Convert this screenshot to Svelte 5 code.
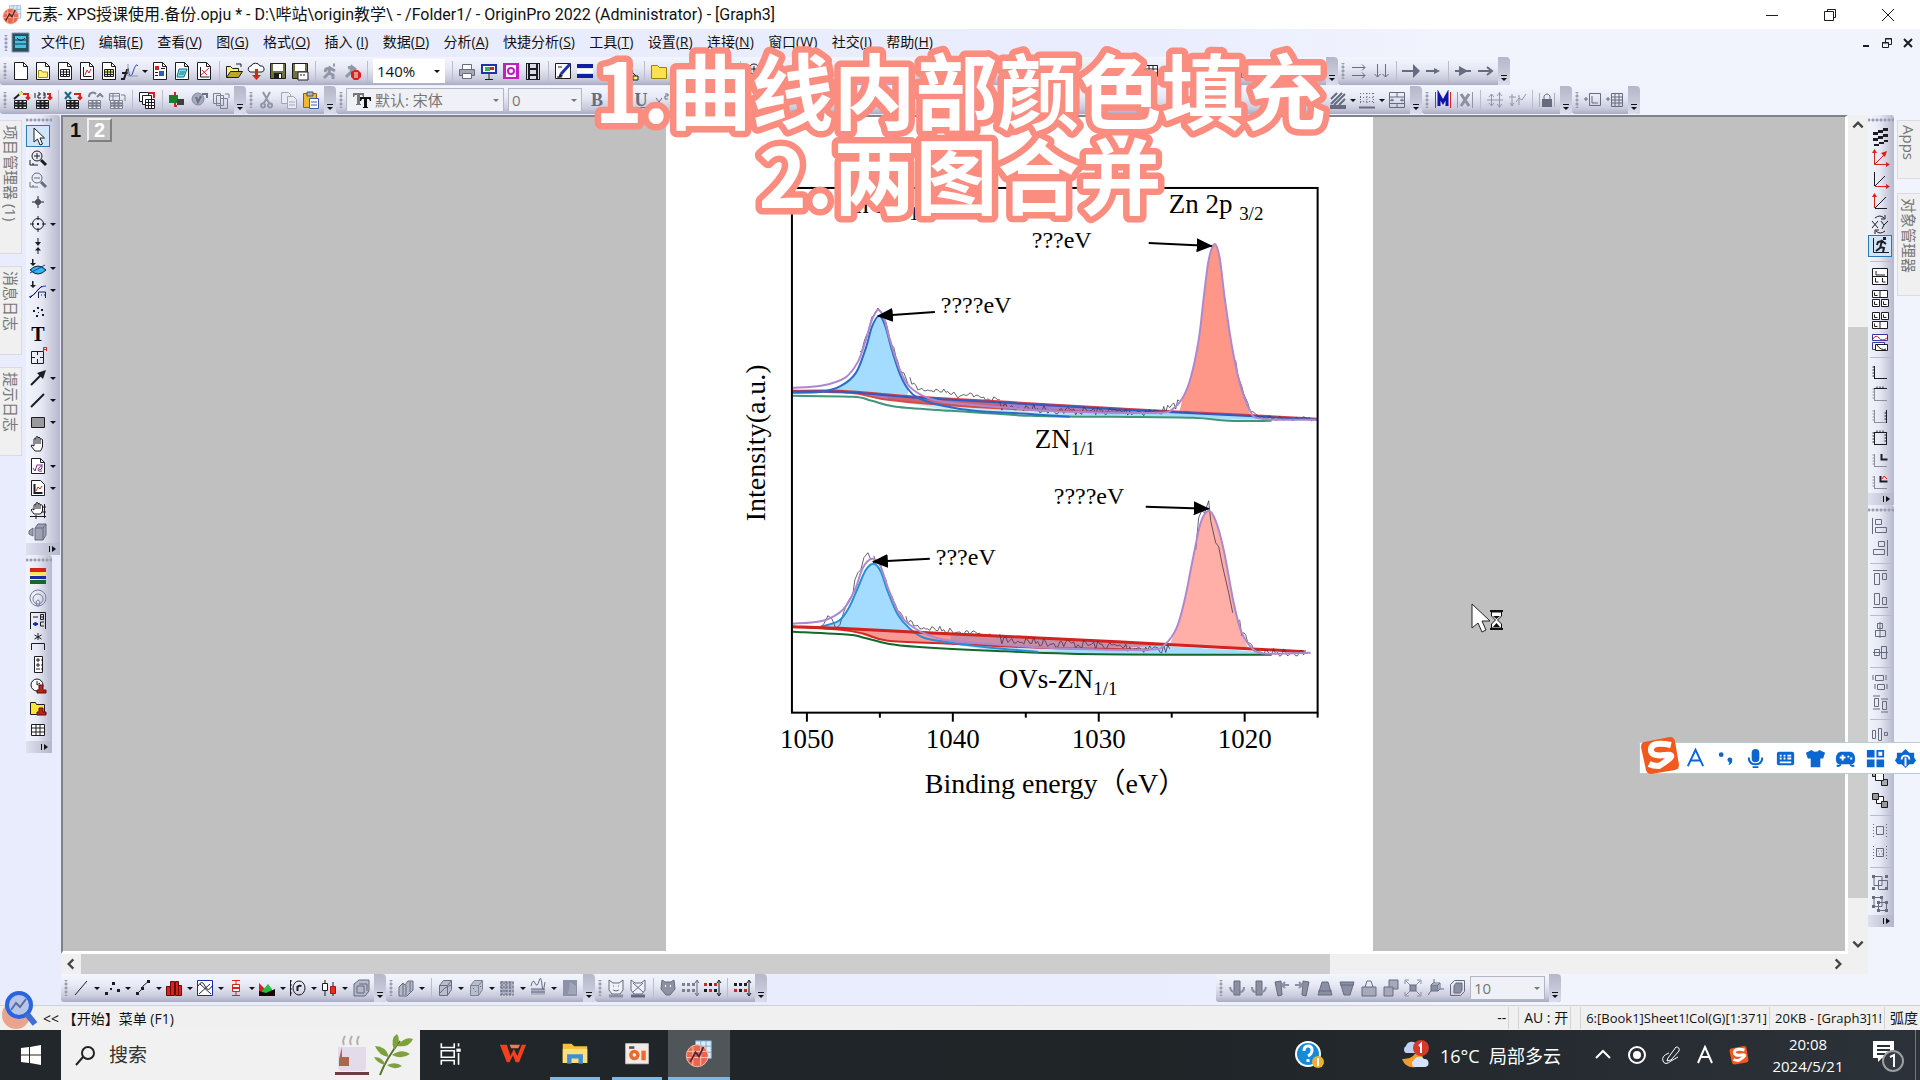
<script lang="ts">
    type Point = [number, number];

    const DARK = '#1c1c22';
    const GREY = '#666b80';
    const RED = '#d3231a';

    const s = (d: string, color = DARK, width = 1) =>
        `<path d="${d}" fill="none" stroke="${color}" stroke-width="${width}"/>`;
    const f = (d: string, color = DARK, stroke = 'none') =>
        `<path d="${d}" fill="${color}" stroke="${stroke}"/>`;

    const PAGE = f('M3.5 1.5h9l4 4v13h-13z', '#fff', DARK) + s('M12.5 1.5v4h4');
    const GRID = f('M5.5 8.5h9v7h-9z', '#fff', DARK) + s('M5 11h10M5 13.5h10M8.5 8v8M11.5 8v8');
    const sheet = (c: string) => f('M3.5 10.5h12v8h-12z', '#fff', c) + s('M3 13.2h13M3 15.8h13M7.5 10v9M11.5 10v9', c, 2);
    const cubeAt = (c: string) => f('M4.5 7.5l4-5h8v9l-4 6h-8z', '#b9bdcc', c) + s('M4.5 7.5h8l4-5M12.5 7.5v10', c);
    const mini = (x: number, y: number, w = 7, h = 7) =>
        f(`M${x} ${y}h${w}v${h}h-${w}z`, '#fff', DARK) + s(`M${x + 2} ${y + 2}v${h - 4}h3`);
    const axes = (l: string, b: string, t = '', r = '') =>
        s('M4.5 4v12.5', l) + s('M4 16.5h13', b) + s('M2.5 5h2M2.5 8h2M2.5 11h2M2.5 14h2', l) +
        (t ? s('M4 4.5h13M7 2.5v2M10 2.5v2M13 2.5v2', t) : '') + (r ? s('M16.5 4v13M14.5 7h2M14.5 10h2M14.5 13h2', r) : '');

    const icons: Record<string, string> = {
        'new page': PAGE,
        'new folder': PAGE + f('M5.5 9.5h3l1 1.5h5v5.500h-9z', '#fff27a', '#a58b12'),
        'new workbook': PAGE + GRID,
        'new graph': PAGE + s('M6.5 6v9.500h8') + s('M8 14l2-5 2 3 2-4', RED),
        'new matrix': PAGE + f('M5 8h10v8H5z', '#f9e75c') + s('M5.500 8.500h9v7h-9zM5 11h10M5 13.500h10M8.500 8v8M11.500 8v8'),
        'new function': s('M8 7q2 14 5 4t5-6', '#3346c4') + s('M1 18h3l3-9h2M2 12h6', DARK, 2) + s('M8 3v12h10', '#9095b4'),
        'new layout': PAGE + f('M5 5h4v4H5z', RED) + f('M9 10h5v5H9z', '#2f55c8') + s('M5 11.500h3M5 14.500h3M11 7.500h4'),
        'new notes': PAGE + f('M7 8h8l-3 8H5z', '#7ee0ec', '#146d86') + s('M8 11h5M7 13h5', '#146d86'),
        'new excel': PAGE + s('M6 15l9-8M8 9l5 5', RED) + s('M6.500 6v10h9'),
        'open': f('M2.500 16.500v-11h4l2 2h6v3', '#fff27a', DARK) + f('M2.500 16.500l4-6h12l-4 6z', '#b8a72a', DARK) + s('M12 3h5v3'),
        'open cloud': f('M3 10a3 3 0 0 1 2-5 5 5 0 0 1 9 0 3 3 0 0 1 2 6H4z', '#fff', DARK) + f('M9 8h3v6h3l-4.500 5L6 14h3z', RED),
        'save': f('M2.500 2.500h15v15h-15z', '#6f7240', DARK) + f('M5 3h10v7H5z', '#fff') + f('M6 12h8v6H6z') + f('M11 13h2v4h-2z', '#fff'),
        'save as': f('M2.500 2.500h15v15h-15z', '#6f7240', DARK) + f('M5 3h10v7H5z', '#fff') + f('M8 11h10v8H8z', '#fff', DARK) + s('M10 14h2M13 14h2'),
        'recalculate': s('M4 17l5-5 1-5 5 3M10 7L6 8l-1 3M9 12l4 2v4M13 4h2', '#9297a8', 3),
        'stop': s('M4 16l5-5 1-5 4 3M10 6L6 7', '#9297a8', 3) + f('M9 11l3-2h4l3 3v4l-3 3h-4l-3-3z', RED) + s('M13 11v6M15 11v6', '#fff'),
        'print': f('M5.500 3.500h9v5h-9z', '#fff', GREY) + f('M2.500 8.500h15v6h-15z', '#a4a8b8', GREY) + f('M5.500 12.500h9v5h-9z', '#fff', GREY),
        'slide show': f('M2 3h16v10H2z', '#1d35a8') + f('M4 5h12v6H4z', '#fff') + f('M6 6h5v4H6z', '#43ad46') + f('M11 6h4v3h-4z', RED) + s('M10 13v5M6 18.500h8'),
        'send': f('M2 2h16v16H2z', '#c31fc0') + f('M5 4h10v12H5z', '#fff') + s('M7 10a3 3 0 1 0 6 0 3 3 0 1 0-6 0', '#c31fc0', 2),
        'video': f('M3 2h14v17H3z') + f('M7 3h6v4H7zM7 9h6v4H7zM7 15h6v3H7z', '#d9dce8') + s('M4.500 3v15M15.500 3v15', '#d9dce8', 1),
        'brush': f('M2.500 2.500h15v15h-15z', '#fff', DARK) + s('M17 3L8 13', '#1d35a8', 3) + s('M4 16h5M5 6h4') + f('M7 12l3 3-5 2z'),
        'layers': f('M2 3h16v4H2zM2 13h16v4H2z', '#10209f') + f('M2 8h16v4H2z', '#fff'),
        'digitizer': f('M3 3h14v14H3z', '#fff', DARK) + s('M5 15l4-6 3 3 4-7', RED, 2),
        'tree': f('M8 2h5v4H8zM2 15h5v4H2zM14 15h5v4h-5z', '#fff36a', DARK) + f('M10.500 7l3.500 3-3.500 3L7 10z', '#59bde0', DARK) + s('M8 11l-4 4M13 11l4 4'),
        'explorer': f('M2.500 4.500h6l2 2h7v11h-15z', '#fbe24c', '#9b820f'),
        'wizard': sheet(DARK) + s('M3 9l8-7', DARK, 2) + s('M12 4h5v5M15 7l2 2 2-2', RED, 2) + f('M8 2h3v3H8z', '#efe44c'),
        'import ascii': sheet(DARK) + s('M2 3v5M5 3h2v2H5v3h3M10 3h2v5h-2M10 5h2', DARK) + s('M14 4h3v5M15 7l2 2 2-2', RED, 2),
        'import excel': sheet(DARK) + s('M2 2l6 7M8 2L2 9', '#1a6a7d', 2) + s('M11 4h6v5M15 7l2 2 2-2', RED, 2),
        'reimport': sheet('#7d8293') + s('M4 7a4 4 0 0 1 7-3M12 7l3-3 3 3', '#7d8293', 2),
        'clone': s('M2.500 3.500h10v7h-10zM2 6h11M6 3v8M14 5h4v6', '#7d8293', 1) + sheet('#7d8293'),
        'batch': f('M2.500 2.500h9v9h-9z', '#fff', DARK) + f('M5.500 5.500h9v9h-9z', '#fff', DARK) + f('M8.500 9.500h9v9h-9z', '#fff', DARK) + s('M8 12.500h10M8 15.500h10M11.500 10v8M14.500 10v8') + s('M12 3h5v5', RED, 2),
        'connect': f('M2 5h9v8H2z', '#217b2a') + f('M10 9h7v6h-7z', '#39413a') + s('M8 2v3M8 13v3h2', RED, 2),
        'disconnect': f('M3 9a6 6 0 1 0 12 0A6 6 0 1 0 3 9', '#a6aabb', '#8589a0') + s('M7 7l2 5 3-6M13 4h5v4', '#6d7187', 2),
        'copy pages': s('M2.500 3.500h7v10h-7zM5.500 5.500h7v10h-7zM9.500 8.500h7v10h-7zM14 4h4v4', '#7d8293'),
        'cut': s('M6 2l6 11M13 2L7 13M4 16a2 2 0 1 0 4-1 2 2 0 1 0-4 1M11 15a2 2 0 1 0 4 1 2 2 0 1 0-4-1', '#9297a8', 2),
        'copy': f('M2.500 2.500h7l2 2v9h-9z', '#e8ebf4', '#a2a6b7') + f('M8.500 6.500h6l3 3v9h-9z', '#e8ebf4', '#a2a6b7') + s('M10 12h6M10 15h6', '#a2a6b7'),
        'paste': f('M2.500 3.500h13v14h-13z', '#f0b832', '#8c620f') + f('M6 2h6v4H6z', '#aeb2bd', '#51545c') + f('M8.500 8.500h9v10h-9z', '#fff', '#3d5ea0') + s('M10 12h6M10 15h6', '#3d5ea0'),
        'superscript': s('M3 8l6 8M9 8l-6 8M12 4h3v2h-3v3h3', GREY, 1),
        'align text': s('M3 4h14M3 8h9M3 12h14M3 16h9', GREY, 2),
        'greek': s('M13 5L8 15q-5 1-4-4t5-3l6 7', GREY, 2),
        'font colour': s('M5 14l5-11 5 11M7 10h6', GREY, 2) + s('M3 18h14', RED, 2),
        'hatch': s('M3 9l6-6M3 14L14 3M6 15L17 4M11 15l6-6', GREY, 2) + f('M2 15h16v4H2z', GREY),
        'dotted': `<path d="M3 3.500h14M3 7.500h14M3 11.500h14M3.500 3v12M10 3v12M16.500 3v12" stroke="${GREY}" stroke-dasharray="1 2"/>` + s('M2 17.500h16', GREY, 2),
        'merge cells': s('M2.500 2.500h15v15h-15zM2 7h16M2 13.500h16M10 2v5M10 13v5M3 10.200h4M13 10.200h4M5 8.500v3M15 8.500v3', GREY, 1),
        'two right': s('M3 6.500h13M13 3.500l3 3-3 3M3 14.500h13M13 11.500l3 3-3 3', GREY, 1),
        'two down': s('M6.500 3v13M3.500 13l3 3 3-3M14.500 3v13M11.500 13l3 3 3-3', GREY, 1),
        'big arrow': s('M1 10h12', GREY, 2) + f('M12 3l7 7-7 7z', GREY),
        'small arrow': s('M3 10h12', GREY, 2) + f('M11 7l6 3-6 3z', GREY),
        'mid arrow': s('M2 10h16', GREY, 2) + f('M6 5l9 5-9 5z', GREY),
        'open arrow': s('M3 10h14M12 6l5 4-5 4', GREY, 2),
        'mask': s('M2.500 2v16M17.500 2v16', RED) + s('M6 16V5l4 7 4-7v11', '#0d15ad', 3),
        'unmask': s('M2.500 2v16M17.500 2v16', '#9297a8') + s('M6 4l8 12M14 4L6 16', '#8c90a0', 3),
        'mask range': s('M6.500 4v12M14.500 2v16M2 10h16M4 7l2.500-3L9 7M4 13l2.500 3L9 13M12 6l2.500-3L17 6M12 14l2.500 3 2.500-3', '#9297a8'),
        'mask curve': s('M2 7h7M5 4v12M3 13l2 3 2-3M9 12l3-4 3 2 4-6M12 5v10', '#9297a8'),
        'lock': f('M5 9h10v8H5z', GREY) + s('M7 9V6q3-4 6 0v3', GREY, 1) + s('M2.500 3v14M17.500 3v14', '#a8acbc'),
        'add layer': s('M6.500 3.500h11v12h-11zM9 6v7h6M1 9h4M3 7v4', GREY, 1),
        'add table': s('M6.500 3.500h11v13h-11zM6 7h12M6 10h12M6 13h12M10 3v14M14 3v14M1 9h4M3 7v4', GREY),

        'pointer': f('M6 2v14l3.500-3 2.500 6 2.500-1-2.500-6h4.500z', '#fff', DARK),
        'zoom in': s('M4 8a5 5 0 1 0 10 0A5 5 0 1 0 4 8M9 5v6M6 8h6') + s('M13 12l5 5', DARK, 3) + s('M2 12v5h8M5 15v2'),
        'zoom out': s('M4 8a5 5 0 1 0 10 0A5 5 0 1 0 4 8M6 8h6', GREY) + s('M13 12l5 5', GREY, 3) + s('M2 12v5h8M5 15v2', GREY),
        'screen reader': s('M10 4v12M4 10h12') + s('M8 8h4v4H8z'),
        'data reader': s('M4.500 10a5.500 5.500 0 1 0 11 0 5.500 5.500 0 1 0-11 0M10 2v4M10 14v4M2 10h4M14 10h4') + f('M9 9h2v2H9z'),
        'data selector': f('M9.500 2h1v4h2.500l-3 4-3-4h2.500zM9.500 18h1v-3.500h2.500l-3-3.500-3 3.500h2.500z'),
        'selection': f('M2 12q8-8 16 0-8 8-16 0z', '#27b9ef', DARK) + s('M2 15l15-8', '#1a3bb4') + f('M4 1h1.500v4H8L5 8 2 5h2z'),
        'mask tool': s('M1 17q5-1 8-6t9-5', '#1a3bb4') + s('M2 18L14 6', DARK) + s('M10.500 18v-6h7v6M13 15h1M16 15h1', '#12275f') + f('M4 1h1.500v4H8L5 8 2 5h2z'),
        'draw data': f('M5 8h2v2H5zM8 13h2v2H8zM9 5h2v2H9zM13 7h2v2h-2zM14 12h2v2h-2zM10 10h1v1h-1z'),
        'text': `<text x="10" y="17" text-anchor="middle" font-family="Liberation Serif, serif" font-weight="bold" font-size="20">T</text>`,
        'annotation': s('M3.500 5.500h12v12h-12zM9.500 5v4M9.500 13v5M3 11.500h4M12 11.500h4') + s('M15.500 5V1.500h3V5M15.500 3.500h3', RED),
        'arrow tool': s('M3 17L13 7', DARK, 2) + f('M9 5l9-3-3 9z'),
        'line tool': s('M3 17L16 4', DARK, 2),
        'rectangle tool': f('M3.500 5.500h13v10h-13z', '#9a9a9e', DARK),
        'pan': f('M7 17l-4-5q0-2 3 0V5q1-1 2 0V3q1-1 2 0v1q1-2 2 0v1q2-1 2.500 1v7l-2 4z', '#fff', DARK) + s('M8 5v5M10 4v6M12 5v5'),
        'equation': f('M3.500 2.500h9l4 4v11h-13z', '#fff', DARK) + s('M12.500 2.500v4h4') + s('M5 12l2 3 2-6h6M11 14q3 0 3-3t-3 1 3 3', '#7c2a8f'),
        'insert graph': f('M3.500 2.500h9l4 4v11h-13z', '#fff', DARK) + s('M6.500 6v9h8', DARK, 2) + s('M8 13l2-4 2 2 2-3', RED),
        'rescale': f('M6 14l-3-4q1-2 3 0V5q1-1 2 0V3q1-1 2 0v1q1-1 2 0v1q2-1 2.500 1v5l-2 3z', '#fff', DARK) + s('M8 5v4M10 4v5M12 5v4') + s('M16.500 4v14M2 16.500h16M14 7h4M14 12h4M8 15v4'),
        'rotate 3d': f('M7 6l3-4h8v11l-3 5H7z', '#9da1b1', GREY) + s('M7 6h8l3-4M15 6v12', GREY) + f('M1 9l4-3v8l-4-2z', '#9da1b1', GREY),
        'palette': f('M2 2h16v4H2z', RED) + f('M2 6h16v3H2z', '#ffe65b') + f('M2 10h16v3H2z', '#1c2aa9') + f('M2 14h16v4H2z', '#196629'),
        'contour': s('M2 10a8 8 0 1 0 16 0A8 8 0 1 0 2 10M5 11a5 5 0 1 0 10 0 5 5 0 1 0-10 0M8 14q2-4 4 0l-1 4H9z', '#747fa0'),
        'legend': s('M2.500 19V2.500h15V19M5 7h5') + s('M12.500 4.500h3v5h-3zM12 7h4') + s('M5 14h5M7.500 12v4', '#1b2cb5', 2) + s('M16 12h-3.500v4H16'),
        'asterisk': s('M10 1v7M6.500 3l7 4M13.500 3l-7 4', DARK, 1) + s('M3.500 18v-6.500h13V18', DARK, 1),
        'scale bar': f('M6.500 2.500h8v16h-8z', '#fff', DARK) + s('M8 6h4M10 4v4M8 11h4M10 9v4M8 15h4M13 6h1M13 11h1M13 15h1', DARK),
        'date stamp': f('M3 9a6 6 0 1 0 12 0A6 6 0 1 0 3 9', '#fff', DARK) + s('M9 5v4l3-2') + f('M11 9h4v5h3v3H9v-3h2z', '#b8251c', '#5a0f0b'),
        'project stamp': f('M2.500 4.500h5l1 2h8v10h-14z', '#f9e62f', DARK) + f('M11 10h4v4h3v3H9v-3h2z', '#b8251c', '#5a0f0b'),
        'table': f('M3.500 4.500h13v11h-13z', '#fff', DARK) + s('M3 8h14M3 12h14M8 4v12M12 4v12'),

        'antialias': f('M3 6h5V4h5V2h5v3h-5v2H8v2H3zM3 12h5v-2h5V8h5v3h-5v2H8v2H3zM4 18h5v-2h5v-2h4v2h-4v2H9v2H4z'),
        'rescale xy': s('M4.500 3v13.500H18M5 16L15 6', RED, 1) + f('M2 5l2.500-4L7 5zM16 14l4 2.500-4 2.500zM11 5l6-2-2 6z', RED),
        'rescale x': s('M4.500 2v14M5 16L15 6') + s('M5 16.500h13', RED, 1) + f('M16 14l4 2.500-4 2.500z', RED),
        'rescale y': s('M5 16.500h12M5 16L16 5') + s('M4.500 4v12', RED, 1) + f('M2 5l2.500-4L7 5z', RED),
        'exchange axes': s('M2 7l6 7M8 7l-6 7M11 7l3 4 4-4M14 11l-2 4', DARK, 1) + s('M5 4q5-4 9 0M15 1v4h-4M15 17q-5 4-9 0M5 20v-4h4'),
        'speed mode': s('M3.500 2v14.500H19', DARK, 1) + f('M13 1h3v3h-3z') + s('M6 15l4-3 2-7 4 3M12 5L8 6 7 9M10 11l4 1-1 4', DARK, 2),
        'extract 1': f('M2.500 2.500h15v16h-15z', '#fff', DARK) + s('M6 5v4h9M5.500 12v4h3M12.500 12v4h3M2 10.500h16', DARK, 1),
        'extract 2': mini(2.5, 2.5, 15, 7) + s('M10 2v7') + mini(2.5, 11.5, 7, 7) + mini(11.5, 11.5, 7, 7),
        'extract 3': mini(2.5, 2.5, 7, 7) + mini(11.5, 2.5, 7, 7) + mini(2.5, 11.5, 15, 7) + s('M10 11v7'),
        'stack': f('M2.500 2.500h15v6h-15z', '#fff', '#3436a6') + s('M3 7q3-5 6-1t8 0', RED) + f('M2.500 10.500h12v7h-12z', '#fff', '#3436a6') + f('M5.500 12.500h12v6h-12z', '#fff', DARK) + s('M7 13q4 6 9 4'),
        'axes lb': axes(DARK, DARK),
        'axes t': axes('#8b8f9e', '#8b8f9e', DARK),
        'axes r': axes('#8b8f9e', '#8b8f9e', '', DARK),
        'axes box': axes(DARK, DARK, DARK, DARK),
        'axes inset': axes('#8b8f9e', '#8b8f9e') + s('M11.500 4v5.500h6', DARK, 2),
        'axes inset data': axes('#8b8f9e', '#8b8f9e') + s('M10.500 4v5.500h7', DARK, 2) + s('M12 7l2-3 3 3', RED),
        'align left': s('M5.500 3.500h6v5h-6zM5.500 11.500h11v5h-11zM2.500 2v16', GREY),
        'align right': s('M8.500 3.500h6v5h-6zM3.500 11.500h11v5h-11zM17.500 2v16', GREY),
        'align top': s('M4.500 5.500h5v11h-5zM12.500 5.500h4v6h-4zM3 2.500h14', GREY),
        'align bottom': s('M4.500 3.500h5v11h-5zM12.500 7.500h4v7h-4zM3 17.500h15', GREY),
        'centre v': s('M7.500 3.500h5v5h-5zM5.500 10.500h10v6h-10zM10 2v16', GREY),
        'centre h': s('M4.500 7.500h5v6h-5zM11.500 4.500h5v12h-5zM3 10.500h15', GREY),
        'distribute h': s('M5.500 3.500h8v5h-8zM7.500 12.500h7v5h-7zM3 3v5M16 3v5M5 12v5M17 12v5', GREY),
        'distribute v': s('M4.500 4.500h4v8h-4zM12.500 7.500h4v8h-4zM3 2h7M11 5h7M3 15h7M11 18h7', GREY),
        'same width': s('M2.500 6.500h3v8h-3zM8.500 4.500h3v12h-3zM14.500 8.500h3v3h-3z', GREY),
        'same height': s('M3.500 5.500h4v11h-4zM11.500 5.500h4v11h-4z', GREY),
        'front': f('M2.500 2.500h6v6h-6z', '#aaa', DARK) + f('M11.500 11.500h6v6h-6z', '#aaa', DARK) + f('M5.500 4.500h8v8h-8z', '#fff', DARK),
        'back': f('M6.500 6.500h7v7h-7z', '#fff', DARK) + f('M2.500 3.500h6v6h-6z', '#999', DARK) + f('M11.500 11.500h6v6h-6z', '#999', DARK),
        'object front': s('M6.500 6.500h7v8h-7z', GREY) + `<path d="M3.500 4v13M16.500 4v13" stroke="${GREY}" stroke-dasharray="1 2"/>`,
        'object back': s('M6.500 6.500h7v8h-7zM8 9h1M11 9h1M9 12h1M12 12h1', GREY) + `<path d="M3.500 4v13M16.500 4v13" stroke="${GREY}" stroke-dasharray="1 2"/>`,
        'group': s('M4 4.500h8v9H4zM8.500 8.500h9v9h-9z', GREY) + f('M2 3h3v3H2zM15 3h3v3h-3zM2 15h3v3H2zM15 15h3v3h-3z', GREY),
        'ungroup': s('M4 3.500h8v9H4zM8.500 8.500h8v8h-8z', GREY) + f('M2 2h3v3H2zM10 2h3v3h-3zM2 11h3v3H2zM7 7h3v3H7zM15 7h3v3h-3zM7 15h3v3H7zM15 15h3v3h-3z', GREY),

        'line plot': s('M4 17L16 3', DARK, 1),
        'scatter plot': f('M3 14h3v3H3zM8 10h2v2H8zM10 4h3v3h-3zM15 11h3v3h-3z'),
        'line symbol plot': s('M4 16l5-5 1-3 6-5') + f('M3 14h3v3H3zM8 9h3v3H8zM14 2h3v3h-3z'),
        'column plot': f('M2.500 8.500h4v9h-4zM6.500 3.500h4v14h-4zM11.500 3.500h3v14h-3zM14.500 7.500h3v10h-3z', '#dc2118', '#5f0d0a'),
        'multi plot': f('M2.500 2.500h15v15h-15z', '#fff', '#1b2a9d') + s('M3 8q4-7 7 0t7 0M4 16L15 6M5 6l11 10', '#223'),
        'box plot': s('M10 2v16M6 2.500h8M6 17.500h8', RED, 1) + f('M6.500 6.500h7v7h-7z', '#fff', RED) + s('M6 10h8', RED, 2),
        'area plot': f('M2 5l6 6 10 4v3H2z', RED) + f('M5 13l6-7 4 5v4H5z', '#1fc23a') + f('M2 18v-5l7 2 9-4v7z', '#160808'),
        'polar plot': s('M2.500 2v16M2 3h2M2 7h2M2 11h2M2 15h2', DARK, 1) + s('M5 10a6 7 0 1 0 12 0A6 7 0 1 0 5 10') + s('M9.500 13V8M9.500 9q1-2 4-1', DARK, 2),
        'stock plot': s('M6 2v16M14 4v14') + f('M3.500 5.500h5v7h-5z', '#fff', DARK) + f('M11.500 8.500h5v7h-5z', '#ee2a1d', '#a3160d'),
        'template': f('M3 6l5-4h10v11l-4 5H3z', '#b4b8c8', GREY) + s('M6 8h7v7H6zM8 6h8v7', GREY),
        '3d bars': f('M3 9l4-4 2 2 3-4 5 0v9l-6 6H3z', '#b4b8c8', GREY) + s('M7 6v11M10 7v10M14 4v10', GREY),
        '3d surface': cubeAt(GREY) + s('M5 15q4-6 11-8', GREY),
        '3d scatter': cubeAt('#7d8396') + f('M7 10h1v1H7zM9 13h1v1H9zM14 8h1v1h-1z', GREY),
        'heatmap': f('M3 3h14v14H3z', '#adb1c2') + `<path d="M3 5h14M3 9h14M3 13h14M3 17h14M5 3v14M9 3v14M13 3v14" stroke="${GREY}" stroke-dasharray="2 1"/>`,
        'stacked': f('M3 11h14v6H3z', '#adb1c2') + s('M3 8q2-8 4-3t4-2 3 4 3-3M3 11h14M3 14h14', GREY),
        'image': f('M3 2h14v16H3z', '#8d93a6') + f('M10 4l6 4v8H8z', '#a0a5b7'),
        'mask 1': f('M3 2l4 3h6l4-3v10l-3 4H6l-3-4z', '#eef0f7', GREY) + s('M7 8h1M12 8h1M7 12q3 2 6 0', GREY, 1) + s('M3 18h14', '#8b8f9e', 3),
        'mask 2': f('M3 2l4 3h6l4-3v10l-3 4H6l-3-4z', '#eef0f7', GREY) + s('M5 5l10 9M15 5L5 14', GREY, 1) + s('M3 18h14', GREY, 3),
        'mask 3': f('M4 2l3 2h6l3-2 1 9-5 6H8l-5-6z', '#8d92a5', GREY) + s('M7 8h1M12 8h1', '#fff', 2),
        'rows grey': f('M2 5h3v3H2zM7 5h3v3H7zM12 5h3v3h-3zM2 11h3v3H2zM7 11h3v3H7zM12 11h3v3h-3z', '#7b7f90') + s('M17 3v14M15 5l2-3 2 3M15 15l2 3 2-3', GREY),
        'rows red': f('M2 5h3v3H2zM7 11h3v3H7zM12 5h3v3h-3z', RED) + f('M7 5h3v3H7zM2 11h3v3H2zM12 11h3v3h-3z') + s('M17 3v14M15 5l2-3 2 3M15 15l2 3 2-3'),
        'rows black': f('M2 5h3v3H2zM7 5h3v3H7zM12 5h3v3h-3zM7 11h3v3H7z') + f('M2 11h3v3H2zM12 11h3v3h-3z', RED) + s('M17 3v14M15 5l2-3 2 3M15 15l2 3 2-3'),
        'tilt 1': f('M7 3h6v14H7z', '#8a8fa2', GREY) + s('M3 9q1 6 6 5M17 9q0 5-4 5', '#8a8fa2', 2),
        'tilt 2': f('M7 3h6v14H7z', '#8a8fa2', GREY) + s('M17 9q-1 6-6 5M3 9q0 5 4 5', '#8a8fa2', 2),
        'rotate left': f('M4 4l6-1 1 14-4 1z', '#8a8fa2', GREY) + s('M18 7h-7M14 4l-3 3 3 3', '#8a8fa2', 2),
        'rotate right': f('M10 3l6 1-3 14-4-1z', '#8a8fa2', GREY) + s('M2 7h7M6 4l3 3-3 3', '#8a8fa2', 2),
        'perspective up': f('M7 4h6l4 13H3z', '#8a8fa2', GREY) + s('M3 13h14', GREY),
        'perspective down': f('M3 4h14l-4 13H7z', '#8a8fa2', GREY) + s('M3 7h14', GREY),
        'scale up': f('M3 9h14v9H3z', '#a5a9ba', GREY) + s('M6 9l2-6h4l2 6', GREY),
        'scale down': f('M8 2h9v9H8z', '#a5a9ba', GREY) + f('M3 9h9v9H3z', '#a5a9ba', GREY),
        'fit frame': f('M7 7h6v6H7z', '#8a8fa2', GREY) + s('M2 6V2h4M14 2h4v4M18 14v4h-4M6 18H2v-4M3 3l4 4M17 3l-4 4M3 17l4-4M17 17l-4-4', '#8a8fa2'),
        'reset': f('M6 7h7v6H6z', '#8a8fa2', GREY) + s('M6 7l2-2h7v6l-2 2M13 7l2-2M6 13l-3 4M15 11h4M9 5V1', GREY),
        'reset all': s('M3.500 6.500l4-4h10v11l-4 4h-10z', GREY) + f('M7 8l2-3h6v7l-2 3H7z', '#8a8fa2', GREY),
    };

    const menus = [
        ['文件', 'F'], ['编辑', 'E'], ['查看', 'V'], ['图', 'G'], ['格式', 'O'], ['插入 ', 'I'], ['数据', 'D'],
        ['分析', 'A'], ['快捷分析', 'S'], ['工具', 'T'], ['设置', 'R'], ['连接', 'N'], ['窗口', 'W'], ['社交', 'I'], ['帮助', 'H'],
    ];

    // "|" is a separator, a trailing "+" adds a drop-down arrow
    const standardA = ['new page', 'new folder', 'new workbook', 'new graph', 'new matrix', 'new function+', 'new layout', 'new notes', 'new excel', '|', 'open', 'open cloud', 'save', 'save as', '|', 'recalculate', 'stop', '|'];
    const standardB = ['|', 'print', 'slide show', 'send', 'video', '|', 'brush', 'layers', 'digitizer', 'tree', '|', 'explorer', 'table', 'new notes', 'new excel', '|', 'zoom in', 'print', 'new layout'];
    const arrowTools = ['two right', 'two down', '|', 'big arrow', 'small arrow', '|', 'mid arrow', 'open arrow'];
    const importTools = ['wizard', 'import ascii', '|', 'import excel', 'reimport', 'clone', '|', 'batch', '|', 'connect', 'disconnect', 'copy pages'];
    const editTools = ['cut', 'copy', 'paste'];
    const styleTools = ['hatch+', 'dotted+', 'merge cells'];
    const maskTools = ['mask', 'unmask', '|', 'mask range', 'mask curve', '|', 'lock'];
    const layerTools = ['add layer', 'add table'];
    const leftTools = ['pointer', 'zoom in', 'zoom out', 'screen reader', 'data reader+', 'data selector', 'selection+', 'mask tool+', 'draw data', 'text', 'annotation', 'arrow tool+', 'line tool+', 'rectangle tool+', 'pan', 'equation+', 'insert graph+', 'rescale', 'rotate 3d'];
    const leftTools2 = ['palette', 'contour', 'legend', 'asterisk', 'scale bar', 'date stamp', 'project stamp', 'table'];
    const rightTools = ['antialias', 'rescale xy', 'rescale x', 'rescale y', 'exchange axes', 'speed mode', '|', 'extract 1', 'extract 2', 'extract 3', 'stack', '|', 'axes lb', 'axes t', 'axes r', 'axes box', 'axes inset', 'axes inset data'];
    const rightTools2 = ['align left', 'align right', '|', 'align top', 'align bottom', '|', 'centre v', 'centre h', '|', 'distribute h', 'distribute v', '|', 'same width', 'same height', 'front', 'back', '|', 'object front', 'object back', '|', 'group', 'ungroup'];
    const plotTools = ['line plot+', 'scatter plot+', 'line symbol plot+', 'column plot+', 'multi plot+', 'box plot+', 'area plot+', 'polar plot+', 'stock plot+', 'template'];
    const plotTools3d = ['3d bars+', '|', '3d surface+', '3d scatter+', 'heatmap+', 'stacked+', 'image'];
    const plotMasks = ['mask 1', 'mask 2', '|', 'mask 3', 'rows grey', 'rows red', '|', 'rows black'];
    const rotateTools = ['tilt 1', 'tilt 2', 'rotate left', 'rotate right', 'perspective up', 'perspective down', 'scale up', 'scale down', 'fit frame', 'reset', 'reset all'];

    const active = ['pointer', 'speed mode'];

    function curve(pts: Point[], join = 'M'): string {
        let d = `${join}${pts[0][0]} ${pts[0][1]}`;
        for (let i = 0; i < pts.length - 1; i++) {
            const a = pts[Math.max(i - 1, 0)];
            const b = pts[i];
            const c = pts[i + 1];
            const e = pts[Math.min(i + 2, pts.length - 1)];
            d += `C${b[0] + (c[0] - a[0]) / 6} ${b[1] + (c[1] - a[1]) / 6} ${c[0] - (e[0] - b[0]) / 6} ${c[1] - (e[1] - b[1]) / 6} ${c[0]} ${c[1]}`;
        }
        return d;
    }

    function area(top: Point[], bottom: Point[]): string {
        return curve(top) + curve([...bottom].reverse(), 'L') + 'Z';
    }

    // measured signal: the fitted curve with a repeatable jitter
    function noisy(pts: Point[], from: number, to: number, lift: number, amp: number): string {
        let seed = 7;
        let d = '';
        for (let x = from; x <= to; x += 2) {
            const i = pts.findIndex((p) => p[0] > x);
            const a = pts[Math.max(i - 1, 0)];
            const b = pts[Math.max(i, 0)];
            const t = b[0] === a[0] ? 0 : (x - a[0]) / (b[0] - a[0]);
            seed = (seed * 16807) % 2147483647;
            const y = a[1] + (b[1] - a[1]) * t - lift + (seed / 2147483647 - 0.5) * amp;
            d += `${d ? 'L' : 'M'}${x} ${y.toFixed(1)}`;
        }
        return d;
    }

    const topBase: Point[] = [[793, 391], [841, 391], [920, 397], [1007, 402], [1125, 409], [1244, 415], [1318, 419]];
    const topBlue: Point[] = [[793, 393], [821, 392], [841, 386], [856, 373], [866, 348], [872, 327], [879, 316], [885, 325], [892, 350], [900, 374], [908, 389], [918, 398], [943, 406], [975, 411], [1027, 414], [1070, 417]];
    const topSum: Point[] = [[793, 388], [821, 386], [845, 378], [858, 362], [866, 340], [872, 320], [878, 310], [884, 318], [890, 340], [900, 370], [910, 387], [928, 398], [951, 403], [1007, 408], [1070, 412], [1157, 413], [1173, 409], [1183, 398], [1191, 378], [1199, 340], [1204, 298], [1209, 260], [1215, 244], [1220, 258], [1225, 298], [1232, 345], [1240, 383], [1250, 410], [1262, 419], [1318, 420]];
    const topGreen: Point[] = [[793, 396], [853, 397], [872, 401], [896, 407], [951, 411], [1031, 416], [1110, 417], [1193, 418], [1228, 421], [1272, 421]];
    const topRed: Point[] = [[793, 391], [850, 393], [872, 397], [888, 400], [928, 404], [1007, 409], [1086, 412], [1157, 413]];
    const topTail: Point[] = [[910, 380], [918, 389], [950, 392], [958, 396], [968, 393], [980, 398], [1002, 400]];

    const lowBase: Point[] = [[793, 627], [849, 629], [928, 633], [1034, 638], [1173, 645], [1305, 652]];
    const lowBlue: Point[] = [[821, 627], [839, 621], [849, 608], [858, 588], [866, 570], [874, 564], [881, 572], [888, 592], [898, 615], [910, 629], [924, 638], [951, 643], [991, 648], [1038, 652]];
    const lowSum: Point[] = [[793, 624], [823, 621], [843, 610], [855, 590], [863, 568], [872, 559], [880, 565], [888, 588], [900, 615], [914, 628], [928, 635], [951, 641], [1015, 646], [1070, 649], [1149, 650], [1165, 645], [1177, 628], [1185, 600], [1193, 560], [1201, 523], [1209, 511], [1216, 521], [1224, 550], [1234, 603], [1242, 633], [1254, 650], [1268, 654], [1311, 653]];
    const lowGreen: Point[] = [[793, 632], [849, 635], [864, 638], [888, 644], [916, 647], [991, 651], [1070, 654], [1189, 655], [1272, 655]];
    const lowRed: Point[] = [[793, 627], [841, 630], [864, 634], [888, 641], [951, 644], [1038, 648], [1100, 649], [1149, 650]];
    const lowTail: Point[] = [[906, 620], [918, 627], [950, 631], [966, 632], [985, 636], [1002, 640], [1172, 650]];

    const between = (pts: Point[], a: number, b: number) => pts.filter((p) => p[0] >= a && p[0] <= b);

    const arrows = [
        [1149, 243, 1212, 246], [935, 312, 878, 316], [1146, 507, 1209, 509], [930, 559, 873, 562],
    ];
    const ticks = [807, 880, 953, 1026, 1099, 1172, 1245, 1318];
    const tickLabels: [number, string][] = [[807, '1050'], [953, '1040'], [1099, '1030'], [1245, '1020']];
    const peakLabels: [number, number, string][] = [[1032, 248, '???eV'], [941, 313, '????eV'], [1054, 504, '????eV'], [936, 565, '???eV']];
    const subLabels: [number, number, string, string][] = [
        [839, 213, 'Zn 2p ', '1/2'], [1169, 213, 'Zn 2p ', '3/2'], [1035, 448, 'ZN', '1/1'], [999, 688, 'OVs-ZN', '1/1'],
    ];

    const imeIcons: [string, string][] = [
        ['letters', s('M4 20L12 3l8 17M7 14h10', '#0a66d0', 2)],
        ['punctuation', f('M5 8a2.500 2.500 0 1 0 5 0 2.500 2.500 0 1 0-5 0M14 13a2.500 2.500 0 1 1 5 1q0 4-4 5 1-2 1-3-2-1-2-3', '#0a66d0')],
        ['voice', f('M8 6a4 4 0 0 1 8 0v6a4 4 0 0 1-8 0z', '#0a66d0') + s('M5 11q0 7 7 7t7-7M9 21h6', '#0a66d0', 2)],
        ['keyboard', f('M5 5h14q2 0 2 2v10q0 2-2 2H5q-2 0-2-2V7q0-2 2-2z', '#0a66d0') + s('M6 9h2M10 9h2M14 9h4M6 12h2M10 12h2M14 12h4M6 16h12', '#fff', 2)],
        ['skin', f('M8 3q4 4 8 0l6 3-2 6h-3v9H7v-9H4L2 6z', '#0a66d0')],
        ['game', f('M7 5h10q5 1 5 7t-4 6H6q-4 0-4-6t5-7z', '#0a66d0') + s('M3 19q2 2 4-1M17 18q2 3 4 1', '#0a66d0', 2) + s('M9 8v6M6 11h6M15 9v2M18 11v2', '#fff', 2)],
        ['toolbox', f('M3 3h8v8H3zM3 13h8v8H3zM13 13h8v8h-8z', '#0a66d0') + s('M14 4h6v6h-6z', '#0a66d0', 2)],
        ['smart', f('M12 2l4 4 5 0v5l2 3-3 4-4 0-4 4-4-4-4 0-3-4 2-3V6l5 0z', '#0a66d0') + s('M12 20v-9M8 13q0-4 4-4t4 4', '#fff', 2)],
    ];
</script>

{#snippet tools(items: string[])}
    {#each items as item}
        {#if item === '|'}
            <span class="sep"></span>
        {:else}
            {@const name = item.replace('+', '')}
            <button class="tool" class:active={active.includes(name)} aria-label={name}>
                <svg viewBox="0 0 20 20">{@html icons[name]}</svg>
                {#if item.endsWith('+')}<span class="drop"></span>{/if}
            </button>
        {/if}
    {/each}
{/snippet}

{#snippet more()}
    <button class="more" aria-label="toolbar options"><i></i><span class="drop"></span></button>
{/snippet}

{#snippet bar(items: string[])}
    <div class="bar">
        <span class="grip"></span>
        {@render tools(items)}
        {@render more()}
    </div>
{/snippet}

{#snippet column(items: string[])}
    <div class="column">
        <span class="grip"></span>
        {@render tools(items)}
        <button class="column-end" aria-label="toolbar options"><i></i><b></b></button>
    </div>
{/snippet}

{#snippet originLogo()}
    <svg viewBox="0 0 32 32">
        <path d="M12 1h18v20H12z" fill="#dcecf9" stroke="#7aa6d2" />
        <path d="M12 7h18M12 14h18M18 1v20M24 1v20" stroke="#7aa6d2" />
        <circle cx="14" cy="18" r="12.5" fill="#e8684f" stroke="#f6c3b2" />
        <path d="M3 13h22M2 20h24M9 7v22M18 7v22" stroke="#f9d0c2" />
        <path d="M6 25l6-11 4 5 5-11" fill="none" stroke="#3c2a35" stroke-width="2" />
    </svg>
{/snippet}

{#snippet sogou()}
    <svg viewBox="0 0 40 40">
        <path d="M4 7l26-5q4 0 5 4l4 24q0 4-4 5l-24 4q-4 0-5-4L1 12q0-4 3-5z" fill="#f2591c" />
        <path d="M31 10q-19-4-20 4t14 6-6 11q-6 0-10-2" fill="none" stroke="#fff" stroke-width="6" />
    </svg>
{/snippet}

<div class="app">
    <header class="title">
        <span class="title-icon">{@render originLogo()}</span>
        <h1>元素- XPS授课使用.备份.opju * - D:\哔站\origin教学\ - /Folder1/ - OriginPro 2022 (Administrator) - [Graph3]</h1>
        <button aria-label="minimize"><svg viewBox="0 0 14 14">{@html s('M1 7.500h12')}</svg></button>
        <button aria-label="restore"><svg viewBox="0 0 14 14">{@html s('M1.500 3.500h9v9h-9zM4.500 3V1.500h8v8H11')}</svg></button>
        <button aria-label="close"><svg viewBox="0 0 14 14">{@html s('M1 1l12 12M13 1L1 13')}</svg></button>
    </header>

    <nav class="menu">
        <span class="grip"></span>
        <svg class="menu-icon" viewBox="0 0 20 22">
            <path d="M1 1h17v19H1z" fill="#24515e" stroke="#8e9aa8" />
            <path d="M4 4h11v12H4z" fill="#49c1da" />
            <path d="M4 8h11M4 12h11M6 6q4 5 8 0" stroke="#12344a" fill="none" />
        </svg>
        <div class="menu-items">
            {#each menus as [label, key]}
                <button>{label}(<u>{key}</u>)</button>
            {/each}
        </div>
        <span class="mdi">
            <button aria-label="minimize graph"><svg viewBox="0 0 12 12">{@html f('M3 8h6v2H3z')}</svg></button>
            <button aria-label="restore graph"><svg viewBox="0 0 12 12">{@html s('M1.500 5.500h6v5h-6zM4.500 5V1.500h6v6H8M4 2h7M1 6h7')}</svg></button>
            <button aria-label="close graph"><svg viewBox="0 0 12 12">{@html s('M2 2l8 8M10 2l-8 8', DARK, 2)}</svg></button>
        </span>
    </nav>

    <div class="bars">
        <div class="bar wide">
            <span class="grip"></span>
            {@render tools(standardA)}
            <label class="combo zoom"><select aria-label="zoom"><option>140%</option></select><span class="drop"></span></label>
            {@render tools(standardB)}
            <span class="fill"></span>
            {@render tools(['explorer', 'table', '|', 'unmask', 'align left', 'align right', 'align top', 'align bottom', 'group', 'ungroup'])}
            {@render more()}
        </div>
        {@render bar(arrowTools)}
    </div>
    <div class="bars">
        {@render bar(importTools)}
        {@render bar(editTools)}
        <div class="bar format">
            <span class="grip"></span>
            <label class="combo font">
                <svg viewBox="0 0 20 20"><path d="M1 3h11v4h-1l-1-2H8v9h1v1H4v-1h1V5H3L2 7H1z" fill="#777" /><path d="M8 7h11v4h-1l-1-2h-2v8h1v1h-5v-1h1V9h-2l-1 2H8z" fill="#111" /></svg>
                <select aria-label="font"><option>默认: 宋体</option></select><span class="drop dim"></span>
            </label>
            <label class="combo size"><select aria-label="font size"><option>0</option></select><span class="drop dim"></span></label>
            <button class="letter">B</button>
            <button class="letter"><em>I</em></button>
            <button class="letter"><u>U</u></button>
            {@render tools(['superscript', 'greek', 'align text+', 'font colour+'])}
            <span class="fill"></span>
            {@render tools(styleTools)}
            {@render more()}
        </div>
        {@render bar(maskTools)}
        {@render bar(layerTools)}
    </div>

    <main>
        <aside class="side-tabs">
            <button class="long">项目管理器 (1)</button>
            <button>消息日志</button>
            <button>提示日志</button>
        </aside>
        <aside class="columns left">
            {@render column(leftTools)}
            <div class="short">{@render column(leftTools2)}</div>
        </aside>

        <section class="view">
            <div class="canvas">
                <div class="layers">
                    <button>1</button>
                    <button class="raised">2</button>
                </div>
                <svg class="page" viewBox="666 117 708 830" preserveAspectRatio="xMidYMin meet">
                    <defs>
                        <marker id="head" viewBox="0 0 16 14" refX="15" refY="7" markerWidth="16" markerHeight="14" markerUnits="userSpaceOnUse" orient="auto">
                            <path d="M0 0l16 7-16 7z" />
                        </marker>
                    </defs>

                    <path d={noisy(topSum, 860, 908, 2, 5)} class="raw" />
                    <path d={noisy(topTail, 910, 1000, 0, 5)} class="raw" />
                    <path d={area(between(topBlue, 821, 908), [[821, 392], [908, 395]])} fill="#a3dcff" />
                    <path d={area(topRed.slice(3), topGreen.slice(4))} fill="#c6e9f4" />
                    <path d={area(between(topBase, 841, 1130), between(topRed, 850, 1160))} fill="#aa7dc5" />
                    <path d={area([[888, 397], [928, 399], [1007, 403]], [[888, 400], [928, 404], [1007, 408]])} fill="#cc6274" />
                    <path d={area([[1160, 411], [1244, 415], [1262, 418]], [[1027, 415], [1110, 417], [1193, 418], [1256, 420]])} fill="#a3dcff" />
                    <path d={area(between(topSum, 1178, 1252), [[1180, 411], [1250, 415]])} fill="#ff9789" />
                    <path d={curve(topGreen)} class="line" stroke="#3f9778" />
                    <path d={curve(topRed)} class="line" stroke="#d94b45" />
                    <path d={curve(topBase)} class="line" stroke="#cf3e46" />
                    <path d={curve(topBase.map(([x, y]) => [x, y + 1]))} class="line" stroke="#305ac0" />
                    <path d={curve(topBlue)} class="line" stroke="#2b6ac8" />
                    <path d={noisy(topSum, 1000, 1180, 1, 9)} class="raw" />
                    <path d={noisy(topSum, 1236, 1316, 1, 5)} class="raw" />
                    <path d={curve(topSum)} class="line" stroke="#ae88ce" />

                    <path d={area(lowBlue.slice(0, 10), [[821, 627], [910, 632]])} fill="#a3dcff" />
                    <path d="M819 629L824 624 828 616 832 619 836 629 840 625 844 612 848 602 853 594 855 580 858 573 861 570 864 558 868 553 871 560" class="raw" />
                    <path d={noisy(lowSum, 874, 904, 1, 7)} class="raw" />
                    <path d={noisy(lowTail, 906, 1000, 0, 7)} class="raw" />
                    <path d={area(lowRed.slice(4), lowGreen.slice(5))} fill="#c6e9f4" />
                    <path d={area(between(lowBase, 849, 1174), between(lowRed, 841, 1150))} fill="#c98da7" />
                    <path d={area([[849, 630], [900, 633], [951, 636]], [[849, 631], [888, 641], [951, 643]])} fill="#f79a94" />
                    <path d={area([[1160, 646], [1262, 652]], [[1038, 652], [1110, 654], [1262, 655]])} fill="#a3dcff" />
                    <path d={area(between(lowSum, 1168, 1250), [[1170, 645], [1249, 650]])} fill="#ffafa7" />
                    <path d={curve(lowGreen)} class="line" stroke="#13682c" />
                    <path d={curve(lowRed)} class="line" stroke="#d52b24" />
                    <path d={curve(lowBlue)} class="line" stroke="#258fd8" />
                    <path d={curve(lowBase)} class="line heavy" stroke="#d2231f" />
                    <path d={noisy(lowTail, 1000, 1170, 0, 10)} class="raw" />
                    <path d={noisy(lowSum, 1240, 1306, 1, 9)} class="raw" />
                    <path d="M1196 550l3-32 3-7 3 2 4-12 2 20 5 22 3 4 4 20 6 26 4 20" class="raw" />
                    <path d={curve(lowSum)} class="line" stroke="#ae88ce" />

                    <rect x="792" y="188" width="526" height="525" fill="none" stroke="#000" stroke-width="2" />
                    {#each ticks as x, i}
                        <path d="M{x} 713v{i % 2 ? 5 : 9}" stroke="#000" stroke-width="2" />
                    {/each}
                    {#each arrows as [x1, y1, x2, y2]}
                        <line {x1} {y1} {x2} {y2} stroke="#000" stroke-width="2" marker-end="url(#head)" />
                    {/each}

                    {#each tickLabels as [x, label]}
                        <text {x} y="748" text-anchor="middle">{label}</text>
                    {/each}
                    {#each peakLabels as [x, y, label]}
                        <text {x} {y} class="peak">{label}</text>
                    {/each}
                    {#each subLabels as [x, y, label, sub]}
                        <text {x} {y} xml:space="preserve">{label}<tspan class="sub" dy="7">{sub}</tspan></text>
                    {/each}
                    <text x="925" y="793" class="axis">Binding energy（eV）</text>
                    <text transform="translate(765 443) rotate(-90)" text-anchor="middle" class="axis">Intensity(a.u.)</text>
                </svg>
            </div>
            <div class="vscroll">
                <button aria-label="scroll up"><svg viewBox="0 0 12 12">{@html s('M2 8l4-4 4 4', '#444', 2)}</svg></button>
                <span class="before"></span><span class="thumb"></span><span class="after"></span>
                <button aria-label="scroll down"><svg viewBox="0 0 12 12">{@html s('M2 4l4 4 4-4', '#444', 2)}</svg></button>
            </div>
            <div class="hscroll">
                <button aria-label="scroll left"><svg viewBox="0 0 12 12">{@html s('M8 2L4 6l4 4', '#444', 2)}</svg></button>
                <span class="thumb"></span><span class="after"></span>
                <button aria-label="scroll right"><svg viewBox="0 0 12 12">{@html s('M4 2l4 4-4 4', '#444', 2)}</svg></button>
            </div>
            <div class="bars bottom">
                {@render bar(plotTools)}
                {@render bar(plotTools3d)}
                {@render bar(plotMasks)}
                <span class="fill"></span>
                <div class="bar rotate">
                    <span class="grip"></span>
                    {@render tools(rotateTools)}
                    <label class="combo angle"><select aria-label="angle"><option>10</option></select><span class="drop dim"></span></label>
                    {@render more()}
                </div>
            </div>
        </section>

        <aside class="columns right">
            {@render column(rightTools)}
            {@render column(rightTools2)}
        </aside>
        <aside class="side-tabs right">
            <button class="apps">Apps</button>
            <button class="objects">对象管理器</button>
        </aside>
    </main>

    <footer class="status">
        <svg class="lens" viewBox="0 0 38 40">
            <circle cx="16" cy="25" r="14" fill="#e9a58c" />
            <circle cx="19" cy="15" r="12" fill="#b9c4ea" stroke="#2a65e0" stroke-width="4" />
            <path d="M11 20l5-7 4 4 6-8" fill="none" stroke="#59709e" stroke-width="2" />
            <path d="M27 24l8 10" stroke="#3e6fd6" stroke-width="6" />
        </svg>
        <span class="hint">&lt;&lt; 【开始】菜单 (F1)</span>
        <span class="cell">--</span>
        <span class="cell gap">AU : 开</span>
        <span class="cell gap small">6:[Book1]Sheet1!Col(G)[1:371]</span>
        <span class="cell small">20KB - [Graph3]1!</span>
        <span class="cell last">弧度</span>
    </footer>

    <div class="taskbar">
        <button class="start" aria-label="start">
            <svg viewBox="0 0 20 20"><path d="M0 3l8-1v7.500H0zM9 2l11-2v9.500H9zM0 10.500h8V18l-8-1zM9 10.500h11V20L9 18z" fill="#fff" /></svg>
        </button>
        <label class="search">
            <svg viewBox="0 0 22 22"><path d="M8 9a6 6 0 1 0 12 0A6 6 0 1 0 8 9M9 13l-7 8" fill="none" stroke="#222" stroke-width="2" /></svg>
            <input type="text" placeholder="搜索" />
            <svg class="tea" viewBox="0 0 80 44">
                <path d="M10 12q-2-4 1-9M17 12q-2-4 1-9M24 12q-2-4 1-9" fill="none" stroke="#b5aeb0" stroke-width="2" />
                <path d="M4 14h28v20q0 4-4 4H8q-4 0-4-4z" fill="#e3daea" />
                <path d="M8 14v10h7v9H5v-7z" fill="#a8694a" />
                <path d="M1 39h34v3H1z" fill="#6d3e40" />
                <path d="M46 42q6-16 20-34" fill="none" stroke="#547229" stroke-width="2" />
                <path d="M60 17q-4-12 3-16 5 6-3 16M63 13q8-10 16-7-4 9-16 7M55 24q-10-1-14-11 11 0 14 11M58 22q10-7 18-1-8 6-18 1M51 32q-8-2-11-8 9 0 11 8M53 32q9-4 15 1-8 5-15-1" fill="#7da13b" />
            </svg>
        </label>
        <button class="app-btn" aria-label="task view">
            <svg viewBox="0 0 26 26"><path d="M4 3v4h12V3M4 23v-4h12v4M4 10h12v6H4zM20 3v3M20 12v11" fill="none" stroke="#fff" stroke-width="1.500" /><path d="M18 8h4v3h-4z" fill="#fff" /></svg>
        </button>
        <button class="app-btn" aria-label="wps office">
            <svg viewBox="0 0 32 26"><path d="M1 3h8l4 13 4-8 4 8 5-13h5l-8 20h-4l-3-8-4 8H9z" fill="#f4401f" /><path d="M12 3h12l-2 4h-8z" fill="#ff7a45" /></svg>
        </button>
        <button class="app-btn running" aria-label="file explorer">
            <svg viewBox="0 0 32 28"><path d="M2 3h10l3 3h15v19H2z" fill="#f5c13d" /><path d="M2 9h28v16H2z" fill="#ffdf7a" /><path d="M7 26V15h18v11h-5v-6h-8v6z" fill="#3a8fd6" /></svg>
        </button>
        <button class="app-btn running" aria-label="recorder">
            <svg viewBox="0 0 32 28"><path d="M3 3h26v23H3z" fill="#f3ece6" stroke="#cfc5bd" /><circle cx="13" cy="16" r="4" fill="#fff" stroke="#ee6a2a" stroke-width="4" /><path d="M21 11h5v11h-5z" fill="#ee6a2a" /><path d="M7 6h6v3H7z" fill="#4a5560" /></svg>
        </button>
        <button class="app-btn running current" aria-label="origin">{@render originLogo()}</button>

        <span class="fill"></span>
        <button class="help" aria-label="help">
            <svg viewBox="0 0 30 30"><circle cx="14" cy="14" r="12" fill="#1789d6" stroke="#fff" stroke-width="2" /><path d="M10 11q0-5 4-5t4 4-4 6M14 19v3" fill="none" stroke="#fff" stroke-width="3" /><circle cx="24" cy="22" r="6" fill="#edb02d" /><path d="M24 18v8" stroke="#fff" stroke-width="2" /></svg>
        </button>
        <button class="weather">
            <svg viewBox="0 0 34 32"><path d="M8 14a4 4 0 0 1 0-7 6 6 0 0 1 11-1 4 4 0 0 1 1 8z" fill="#bdd3f5" /><path d="M19 9q-2 12-15 11 4 10 14 8 9-4 6-14z" fill="#f39b2c" /><path d="M16 28a4 4 0 0 1 0-7 6 6 0 0 1 10-1 4 4 0 0 1 1 8z" fill="#d6e4fa" /><circle cx="23" cy="9" r="8" fill="#d63a2a" /><path d="M21 7l2-2v9" fill="none" stroke="#fff" stroke-width="2" /></svg>
            16°C&nbsp; 局部多云
        </button>
        <button class="tray" aria-label="hidden icons"><svg viewBox="0 0 20 20">{@html s('M3 13l7-7 7 7', '#fff', 2)}</svg></button>
        <button class="tray" aria-label="recording"><svg viewBox="0 0 20 20"><circle cx="10" cy="10" r="8" fill="none" stroke="#fff" stroke-width="2" /><circle cx="10" cy="10" r="4" fill="#fff" /></svg></button>
        <button class="tray" aria-label="pen"><svg viewBox="0 0 20 20">{@html s('M7 13L15 2q4 0 3 4l-8 9-4 1zM8 8q-8 3-6 8t8 0l7-4', '#fff', 1)}</svg></button>
        <button class="tray" aria-label="input mode"><svg viewBox="0 0 20 20">{@html s('M3 18L10 2l7 16M6 12h8', '#fff', 2)}</svg></button>
        <button class="tray" aria-label="sogou">{@render sogou()}</button>
        <button class="clock"><span>20:08</span><span>2024/5/21</span></button>
        <button class="notice" aria-label="1 notification">
            <svg viewBox="0 0 34 34"><path d="M2 3h21v17H11l-4 4v-4H2z" fill="#fff" /><path d="M6 8h13M6 12h13M6 16h8" stroke="#2a2f33" stroke-width="2" /><circle cx="22" cy="23" r="10" fill="#33393e" stroke="#9a9fa3" stroke-width="2" /><path d="M19 19l4-2v12" fill="none" stroke="#fff" stroke-width="2" /></svg>
        </button>
    </div>

    <svg class="caption" viewBox="0 0 760 190">
        <text x="380" y="83">1.曲线内部颜色填充</text>
        <text x="380" y="168">2.两图合并</text>
    </svg>

    <div class="ime">
        <span class="ime-logo">{@render sogou()}</span>
        {#each imeIcons as [name, art]}
            <button aria-label={name}><svg viewBox="0 0 24 24">{@html art}</svg></button>
        {/each}
    </div>

    <svg class="cursor" viewBox="0 0 32 32">
        <path d="M1 1v24l6-5 4 9 4-2-4-9h8z" fill="#fff" stroke="#222" />
        <path d="M19 8h13M19 26h13" stroke="#111" stroke-width="2" />
        <path d="M20.500 9h10v4l-4 4 4 4v4h-10v-4l4-4-4-4z" fill="#fff" stroke="#111" />
        <path d="M22 13h7l-3.500 3zM22 24l3.500-4 3.500 4z" fill="#111" />
    </svg>
</div>

<style>
    :global(body) {
        margin: 0;
        overflow: hidden;
    }

    .app {
        position: relative;
        display: flex;
        flex-direction: column;
        height: 100vh;
        overflow: hidden;
        background: linear-gradient(90deg, #e9ecfd, #eaedfe 60%, #f1f4fd 75%, #f1f3fd);
        color: #111;
        font-family: 'Open Sans', 'Noto Sans CJK SC', sans-serif;
        font-size: 14px;
    }

    button,
    select,
    input {
        margin: 0;
        padding: 0;
        border: 0;
        background: none;
        color: inherit;
        font: inherit;
    }

    svg {
        display: block;
        flex-shrink: 0;
    }

    .fill {
        flex: 1;
    }

    .title {
        display: flex;
        align-items: center;
        height: 29px;
        padding-right: 3px;
        background: #fff;
    }

    .title-icon {
        width: 20px;
        margin: 0 4px 0 2px;
    }

    .title h1 {
        flex: 1;
        margin: 0;
        font-family: Roboto, 'Noto Sans CJK SC', sans-serif;
        font-size: 16px;
        font-weight: 400;
        line-height: 24px;
        white-space: nowrap;
    }

    .title button {
        display: flex;
        justify-content: center;
        width: 58px;
    }

    .title button svg {
        width: 14px;
    }

    .menu {
        display: flex;
        align-items: center;
        height: 28px;
        padding-left: 1px;
    }

    .menu-icon {
        width: 20px;
        height: 22px;
        margin-right: 10px;
    }

    .menu-items {
        display: flex;
        justify-content: space-between;
        width: 892px;
    }

    .menu-items button {
        padding-bottom: 2px;
        line-height: 20px;
        white-space: nowrap;
    }

    .mdi {
        display: flex;
        gap: 9px;
        margin-left: auto;
        padding-right: 6px;
    }

    .mdi svg {
        width: 12px;
    }

    .bars {
        display: flex;
        align-items: flex-start;
        height: 29px;
    }

    .bar {
        display: flex;
        align-items: center;
        height: 28px;
        border-radius: 3px;
        background: linear-gradient(#f4f6fe, #e7e9f5 40%, #c9cbdc 80%, #a9abc2);
    }

    .bar.wide {
        width: 1338px;
        overflow: hidden;
    }

    .bar.format {
        width: 1086px;
        overflow: hidden;
    }

    .grip {
        flex: none;
        width: 10px;
        height: 16px;
        background: radial-gradient(circle, #9a9db0 1px, transparent 2px) center / 4px 4px no-repeat;
        background-repeat: repeat-y;
    }

    .tool {
        display: flex;
        flex: none;
        align-items: center;
        justify-content: center;
        min-width: 22px;
        height: 22px;
    }

    .tool svg {
        width: 20px;
        height: 20px;
    }

    .tool.active {
        outline: 1px solid #2a7ab8;
        outline-offset: -1px;
        background: #cfe6fa;
    }

    .drop {
        flex: none;
        width: 0;
        height: 0;
        margin: 0 1px 0 2px;
        border: 3px solid transparent;
        border-top-color: #111;
        border-bottom: 0;
    }

    .drop.dim {
        border-top-color: #777;
    }

    .sep {
        flex: none;
        width: 8px;
        height: 20px;
        background: linear-gradient(#b9bcce, #b9bcce) center / 1px 100% no-repeat;
    }

    .more {
        display: flex;
        flex: none;
        flex-direction: column;
        align-items: center;
        justify-content: flex-end;
        gap: 2px;
        width: 12px;
        height: 28px;
        padding-bottom: 4px;
        margin-left: 2px;
        border-radius: 0 4px 4px 0;
        background: linear-gradient(#b5b7ca, #c5c7d8 50%, #dcdef0);
    }

    .more i {
        width: 6px;
        height: 1px;
        background: #111;
    }

    .more .drop {
        margin: 0;
    }

    .combo {
        display: flex;
        flex: none;
        align-items: center;
        height: 22px;
        border: 1px solid #b4b6c6;
        background: #f0f1f6;
        color: #777;
        font-size: 15px;
    }

    .combo select {
        flex: 1;
        min-width: 0;
        padding: 0 3px;
        appearance: none;
    }

    .combo .drop {
        margin: 0 4px;
    }

    .combo svg {
        width: 20px;
        margin-left: 5px;
    }

    .combo.zoom {
        width: 70px;
        margin: 0 3px 0 2px;
        border-color: #fff;
        background: #fff;
        color: #111;
    }

    .combo.font {
        width: 156px;
    }

    .combo.size {
        width: 72px;
        margin: 0 4px;
    }

    .combo.angle {
        width: 73px;
        margin: 0 2px;
    }

    .letter {
        width: 22px;
        color: #666b80;
        font-family: 'Liberation Serif', serif;
        font-size: 18px;
        font-weight: 700;
    }

    main {
        display: flex;
        flex: 1;
        min-height: 0;
    }

    .side-tabs {
        display: flex;
        flex-direction: column;
        gap: 12px;
        width: 23px;
        padding-top: 5px;
        margin-right: 3px;
    }

    .side-tabs button {
        width: 22px;
        height: 89px;
        padding-top: 4px;
        border: 1px solid #d9dae2;
        border-left: 0;
        background: #f0f0f1;
        color: #777;
        font-size: 15px;
        line-height: 20px;
        text-align: left;
        text-orientation: sideways;
        writing-mode: vertical-rl;
        white-space: nowrap;
    }

    .side-tabs button.long {
        height: 134px;
    }

    .side-tabs.right {
        gap: 14px;
        margin: 0 0 0 3px;
    }

    .side-tabs.right button {
        width: 23px;
        border: 1px solid #d9dae2;
        border-right: 0;
    }

    .side-tabs button.apps {
        height: 59px;
    }

    .side-tabs.right button.objects {
        height: 103px;
    }

    .columns {
        width: 34px;
    }

    .columns.right,
    .columns .short {
        width: 26px;
    }

    .column {
        display: flex;
        flex-direction: column;
        align-items: flex-start;
        border-radius: 3px;
        background: linear-gradient(90deg, #f3f5fd, #e6e8f4 45%, #b6b8cd);
    }

    .column .grip {
        width: 26px;
        height: 10px;
        background-position: center;
        background-repeat: repeat-x;
        background-size: 4px 4px;
    }

    .column .tool {
        justify-content: flex-start;
        min-width: 24px;
        padding-left: 2px;
    }

    .column .sep {
        width: 22px;
        height: 8px;
        margin-left: 2px;
        background-size: 100% 1px;
    }

    .column-end {
        display: flex;
        align-items: center;
        justify-content: flex-end;
        gap: 2px;
        width: 100%;
        height: 12px;
        padding-right: 4px;
        background: linear-gradient(90deg, #dfe1f0, #b4b6ca);
    }

    .column-end i {
        width: 1px;
        height: 6px;
        background: #111;
    }

    .column-end b {
        border: 3px solid transparent;
        border-left: 4px solid #111;
        border-right: 0;
    }

    .view {
        display: grid;
        flex: 1;
        grid-template-columns: 1fr 20px;
        grid-template-rows: 1fr 20px 31px;
        min-width: 0;
        margin-left: 1px;
    }

    .canvas {
        display: grid;
        grid-template-columns: 603fr 708fr 472fr;
        min-height: 0;
        overflow: hidden;
        border: 2px solid #80828a;
        border-right: 3px solid #fff;
        border-bottom: 3px solid #fff;
        background: #c0c0c0;
    }

    .page {
        width: 100%;
        height: 100%;
        min-height: 0;
        background: #fff;
        font-family: 'Liberation Serif', 'Noto Sans CJK SC', serif;
        font-size: 27px;
    }

    .axis {
        font-size: 28px;
    }

    .peak {
        font-size: 24px;
    }

    .sub {
        font-size: 19px;
    }

    .line {
        fill: none;
        stroke-width: 2px;
    }

    .line.heavy {
        stroke-width: 3px;
    }

    .raw {
        fill: none;
        stroke: #3d3a48;
        stroke-width: 1px;
        stroke-opacity: 0.8;
    }

    .layers {
        display: flex;
        align-items: flex-start;
        padding: 1px 0 0 1px;
        font-family: 'Liberation Sans', sans-serif;
        font-size: 20px;
        font-weight: 700;
        line-height: 20px;
    }

    .layers button {
        width: 23px;
        height: 24px;
    }

    .layers .raised {
        width: 25px;
        border: 2px solid;
        border-color: #efefef #808080 #808080 #efefef;
        color: #fff;
    }

    .vscroll {
        display: flex;
        flex-direction: column;
        background: #f0f0f0;
    }

    .hscroll {
        display: flex;
        grid-column: 1 / 3;
        background: #f0f0f0;
    }

    .vscroll button,
    .hscroll button {
        display: flex;
        align-items: center;
        justify-content: center;
        width: 20px;
        height: 20px;
    }

    .hscroll button:last-child {
        width: 60px;
    }

    .vscroll svg,
    .hscroll svg {
        width: 14px;
    }

    .thumb {
        background: #cdcdcd;
    }

    .vscroll .before {
        flex: 192;
    }

    .vscroll .thumb {
        flex: 570;
    }

    .vscroll .after {
        flex: 36;
    }

    .hscroll .thumb {
        flex: 1247;
    }

    .hscroll .after {
        flex: 477;
    }

    .bars.bottom {
        grid-column: 1 / 3;
        height: 30px;
    }

    .bottom .tool .drop {
        margin: 0 2px 0 3px;
    }

    .bar.rotate {
        margin-right: 307px;
    }

    .status {
        position: relative;
        display: flex;
        align-items: center;
        height: 25px;
        border-top: 1px solid #cfcfd6;
        box-sizing: border-box;
        background: #f0f0f0;
        white-space: nowrap;
    }

    .lens {
        position: absolute;
        bottom: 0;
        left: 0;
        width: 38px;
        height: 40px;
    }

    .hint {
        flex: 1;
        padding-left: 43px;
    }

    .cell {
        padding: 0 2px 0 5px;
        border-right: 1px solid #d4d4d8;
        line-height: 22px;
    }

    .cell.gap {
        margin-left: 9px;
        border-left: 1px solid #d4d4d8;
    }

    .cell.small {
        font-size: 13px;
    }

    .cell.last {
        border: 0;
    }

    .taskbar {
        display: flex;
        height: 50px;
        background: linear-gradient(90deg, #22272b, #1f2427 60%, #2c3239);
        color: #fff;
    }

    .taskbar button {
        display: flex;
        align-items: center;
        justify-content: center;
    }

    .start {
        width: 61px;
    }

    .start svg {
        width: 20px;
    }

    .search {
        display: flex;
        align-items: center;
        width: 359px;
        background: #f1f1f1;
        color: #333;
        font-size: 19px;
    }

    .search svg {
        width: 22px;
        margin: 0 13px;
    }

    .search input {
        flex: 1;
        min-width: 0;
    }

    .search input::placeholder {
        color: #333;
        opacity: 1;
    }

    .search .tea {
        width: 80px;
        margin: 0 6px 0 0;
    }

    .app-btn {
        width: 62px;
        height: 50px;
        box-sizing: border-box;
        border-bottom: 3px solid transparent;
    }

    .app-btn svg {
        width: 28px;
    }

    .running {
        background: linear-gradient(#76b9ed, #76b9ed) center bottom / 50px 3px no-repeat border-box;
    }

    .current {
        border-color: #76b9ed;
        background: #505559;
    }

    .help svg {
        width: 30px;
    }

    .weather {
        gap: 8px;
        padding: 0 25px 0 74px;
        font-size: 18px;
    }

    .weather svg {
        width: 34px;
    }

    .tray {
        width: 34px;
    }

    .tray svg {
        width: 20px;
    }

    .clock {
        flex-direction: column;
        width: 104px;
        font-size: 15px;
        line-height: 22px;
    }

    .notice {
        width: 56px;
        border-right: 1px solid #777;
        margin-right: 4px;
    }

    .notice svg {
        width: 34px;
    }

    .caption {
        position: absolute;
        top: 40px;
        left: 50%;
        width: 760px;
        height: 190px;
        margin-left: -380px;
        overflow: visible;
        fill: #fff;
        stroke: #fb8d80;
        stroke-width: 13px;
        stroke-linejoin: round;
        paint-order: stroke;
        text-anchor: middle;
        font-family: 'Noto Sans CJK SC', sans-serif;
        font-size: 82px;
        font-weight: 700;
        pointer-events: none;
    }

    .ime {
        position: absolute;
        top: 742px;
        right: 0;
        display: flex;
        align-items: center;
        height: 30px;
        border: 1px solid #b8ccd6;
        border-right: 0;
        background: #fff;
    }

    .ime-logo {
        width: 40px;
        margin-top: -6px;
    }

    .ime button {
        display: flex;
        justify-content: center;
        width: 30px;
    }

    .ime button svg {
        width: 23px;
    }

    .cursor {
        position: absolute;
        top: 603px;
        left: 1471px;
        width: 32px;
    }
</style>
